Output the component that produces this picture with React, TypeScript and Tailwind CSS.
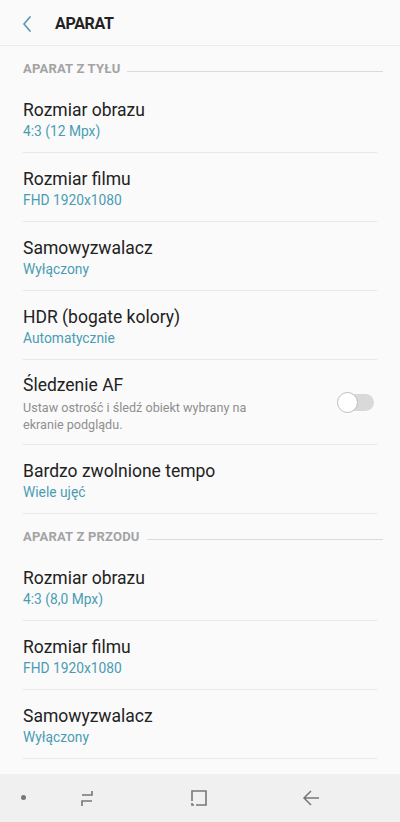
import React from 'react';

type Item = { title: string; value?: string; desc?: string; toggle?: boolean };

const REAR: Item[] = [
  { title: 'Rozmiar obrazu', value: '4:3 (12 Mpx)' },
  { title: 'Rozmiar filmu', value: 'FHD 1920x1080' },
  { title: 'Samowyzwalacz', value: 'Wyłączony' },
  { title: 'HDR (bogate kolory)', value: 'Automatycznie' },
  { title: 'Śledzenie AF', desc: 'Ustaw ostrość i śledź obiekt wybrany na ekranie podglądu.', toggle: true },
  { title: 'Bardzo zwolnione tempo', value: 'Wiele ujęć' },
];

const FRONT: Item[] = [
  { title: 'Rozmiar obrazu', value: '4:3 (8,0 Mpx)' },
  { title: 'Rozmiar filmu', value: 'FHD 1920x1080' },
  { title: 'Samowyzwalacz', value: 'Wyłączony' },
];

function Section({ label }: { label: string }) {
  return (
    <div className="flex h-[38px] items-end pb-[6px] pl-[23px] pr-[17px]">
      <span className="text-[13px] font-bold tracking-[0.2px] text-[#a3a3a3]">{label}</span>
      <div className="mb-[6px] ml-[7px] h-px flex-1 bg-[#dadada]" />
    </div>
  );
}

function Row({ item }: { item: Item }) {
  return (
    <div className="px-[23px]">
      <div className="flex items-center border-b border-[#e8e8e8]">
        <div className={'flex-1 ' + (item.desc ? 'pt-[14px] pb-[11px]' : 'h-[68px] pt-[15px]')}>
          <div className="text-[17.5px] leading-[23px] text-[#222]">{item.title}</div>
          {item.value && <div className="mt-[1px] text-[13.8px] leading-[17px] text-[#4a9cb3]">{item.value}</div>}
          {item.desc && (
            <div className="mt-[2px] w-[252px] text-[12.6px] leading-[17px] text-[#8f8f8f]">{item.desc}</div>
          )}
        </div>
        {item.toggle && (
          <div className="relative mr-[3px] h-[17px] w-[33px] rounded-full bg-[#d9d9d9]">
            <div className="absolute left-[-4px] top-[-2px] h-[21px] w-[21px] rounded-full border-[1.5px] border-[#bdbdbd] bg-white" />
          </div>
        )}
      </div>
    </div>
  );
}

export default function App() {
  return (
    <div className="flex h-[822px] w-[400px] flex-col bg-[#fafafa]" style={{ fontFamily: 'Roboto, "Noto Sans", sans-serif' }}>
      <header className="flex h-[46px] items-center border-b border-[#ececec] pt-[3px]">
        <svg width="12" height="18" viewBox="0 0 12 18" className="ml-[21px]">
          <path d="M9 2 L3 9 L9 16" fill="none" stroke="#5c9db0" strokeWidth="1.8" strokeLinecap="round" strokeLinejoin="round" />
        </svg>
        <h1 className="ml-[22px] text-[16px] font-bold tracking-[-0.3px] text-[#222]">APARAT</h1>
      </header>

      <Section label="APARAT Z TYŁU" />
      {REAR.map((it, i) => (
        <Row key={i} item={it} />
      ))}
      <Section label="APARAT Z PRZODU" />
      {FRONT.map((it, i) => (
        <Row key={i} item={it} />
      ))}

      <div className="flex-1" />
      <nav className="relative flex h-[48px] items-center bg-[#f0f0f0]">
        <div className="absolute left-[21px] top-[21px] h-[5px] w-[5px] rounded-full bg-[#777]" />
        <svg width="18" height="18" viewBox="0 0 18 18" className="absolute left-[78px] top-[15px]">
          <path d="M14 2 V6 H4 M4 17 V12 H14" fill="none" stroke="#777" strokeWidth="1.6" />
        </svg>
        <svg width="18" height="18" viewBox="0 0 18 18" className="absolute left-[190px] top-[15px]">
          <path d="M2 12 V2 H16 V16 H6" fill="none" stroke="#777" strokeWidth="1.6" />
          <path d="M2 14 V16 H4" fill="none" stroke="#777" strokeWidth="1.6" />
        </svg>
        <svg width="18" height="18" viewBox="0 0 18 18" className="absolute left-[302px] top-[15px]">
          <path d="M9 2 L2 9 L9 16 M2 9 H17" fill="none" stroke="#777" strokeWidth="1.5" />
        </svg>
      </nav>
    </div>
  );
}
